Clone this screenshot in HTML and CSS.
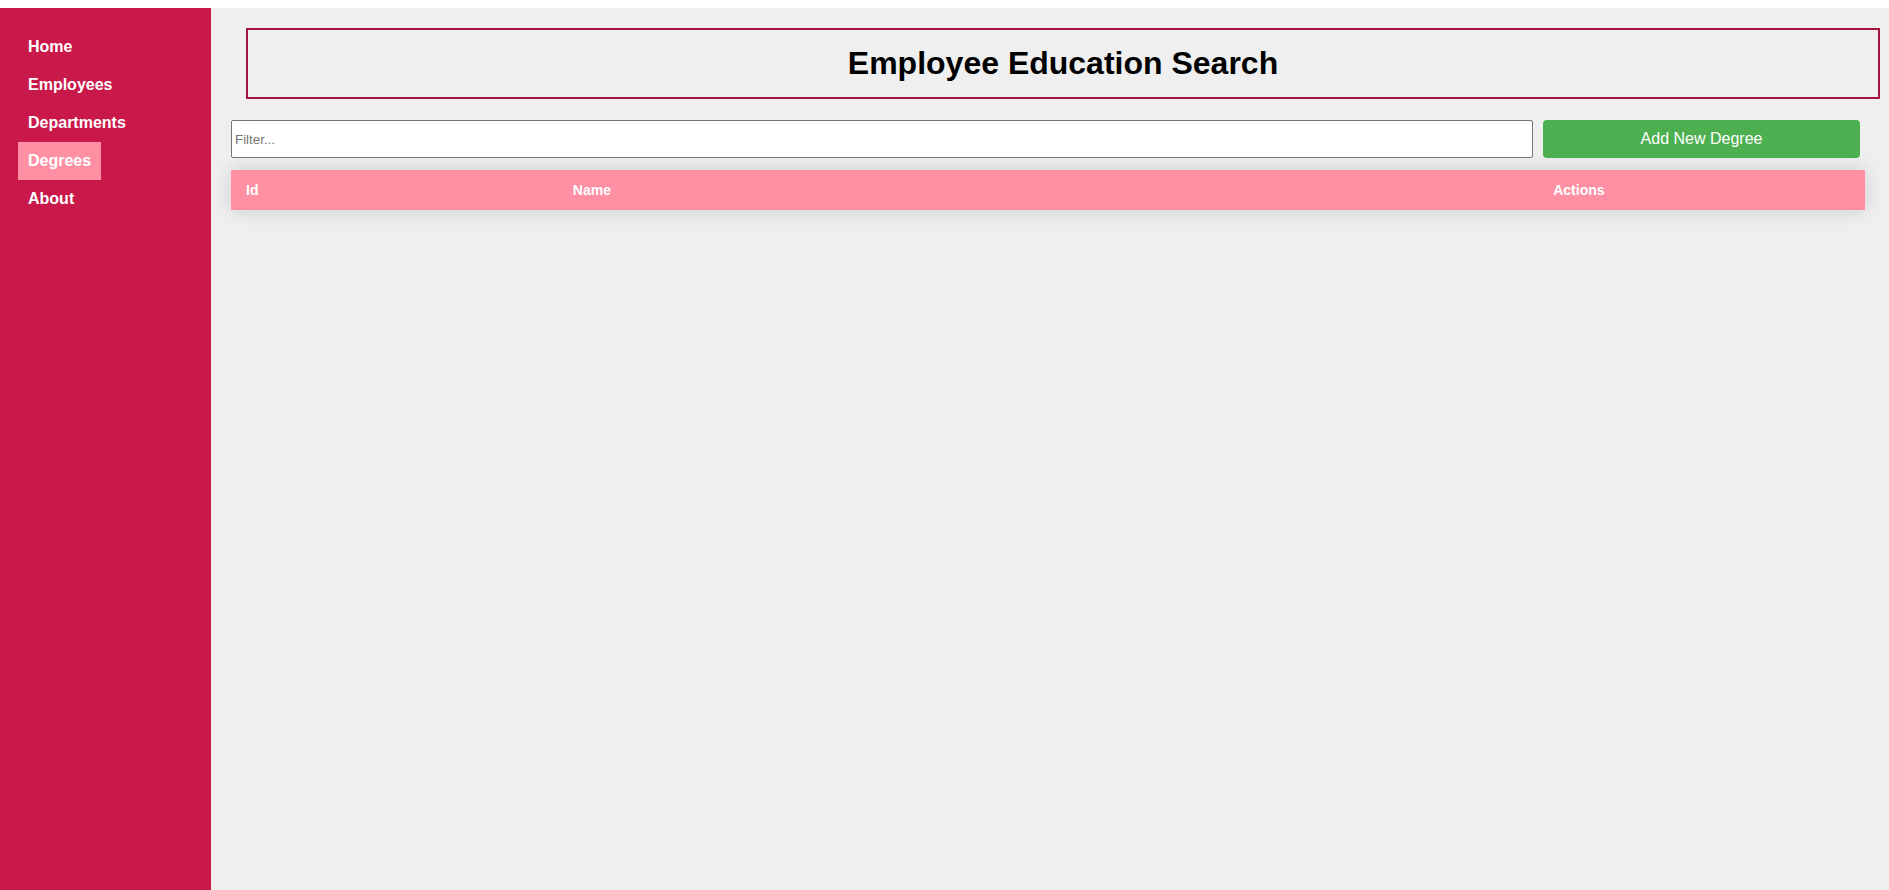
FILE: index.html
```html
<!DOCTYPE html>
<html lang="en">
<head>
<meta charset="utf-8">
<title>Employee Education Search</title>
<link rel="stylesheet" href="styles.css">
</head>
<body>
<div class="layout">
  <nav class="sidebar">
    <a class="nav-item" href="#">Home</a>
    <a class="nav-item" href="#">Employees</a>
    <a class="nav-item" href="#">Departments</a>
    <a class="nav-item active" href="#">Degrees</a>
    <a class="nav-item" href="#">About</a>
  </nav>
  <main class="main">
    <header class="page-header">
      <h1 class="title">Employee Education Search</h1>
    </header>
    <div class="toolbar">
      <input class="filter" type="text" placeholder="Filter...">
      <button class="add-btn" type="button">Add New Degree</button>
    </div>
    <table class="grid">
      <thead>
        <tr>
          <th class="col-id">Id</th>
          <th class="col-name">Name</th>
          <th class="col-actions">Actions</th>
        </tr>
      </thead>
      <tbody></tbody>
    </table>
  </main>
</div>
</body>
</html>
```

FILE: styles.css
```css
* { box-sizing: border-box; }

html, body { height: 100%; }

body {
  margin: 0;
  padding-top: 8px;
  background: #ffffff;
  font-family: "Liberation Sans", Arial, sans-serif;
}

.layout {
  display: flex;
  height: calc(100vh - 8px);
}

.sidebar {
  width: 211px;
  flex: 0 0 211px;
  background: #c9184a;
  padding: 20px 0 0 18px;
  display: flex;
  flex-direction: column;
  align-items: flex-start;
}

.nav-item {
  color: #ffffff;
  text-decoration: none;
  font-weight: bold;
  font-size: 16px;
  line-height: 18px;
  padding: 10px;
}

.nav-item.active {
  background: #ff8fa3;
}

.main {
  flex: 1;
  background: #efefef;
  padding: 20px 24px 0 20px;
  min-width: 0;
}

.page-header {
  margin-left: 15px;
  width: 100%;
  border: 2px solid #a4133c;
  padding: 15px 0;
}

.title {
  margin: 0;
  text-align: center;
  font-size: 32px;
  line-height: 37px;
  font-weight: bold;
  color: #000000;
}

.toolbar {
  display: grid;
  grid-template-columns: 1fr 317px;
  column-gap: 10px;
  margin-top: 21px;
  padding-right: 5px;
}

.filter {
  height: 38px;
  border: 1px solid #767676;
  border-radius: 2px;
  padding: 1px 3px;
  font-family: "Liberation Sans", Arial, sans-serif;
  font-size: 13.33px;
  background: #ffffff;
  margin: 0;
}

.filter::placeholder { color: #757575; }

.add-btn {
  height: 38px;
  border: none;
  border-radius: 4px;
  background: #4caf50;
  color: #ffffff;
  font-family: "Liberation Sans", Arial, sans-serif;
  font-size: 16px;
  margin: 0;
}

.grid {
  width: 100%;
  margin-top: 12px;
  border-collapse: collapse;
  box-shadow: 0 0 20px rgba(0, 0, 0, 0.15);
}

.grid th {
  background: #ff8fa3;
  color: #ffffff;
  font-size: 14px;
  font-weight: bold;
  text-align: left;
  height: 40px;
  padding: 0 15px;
}

.col-id { width: 20%; }
.col-name { width: 60%; }
.col-actions { width: 20%; }
```
